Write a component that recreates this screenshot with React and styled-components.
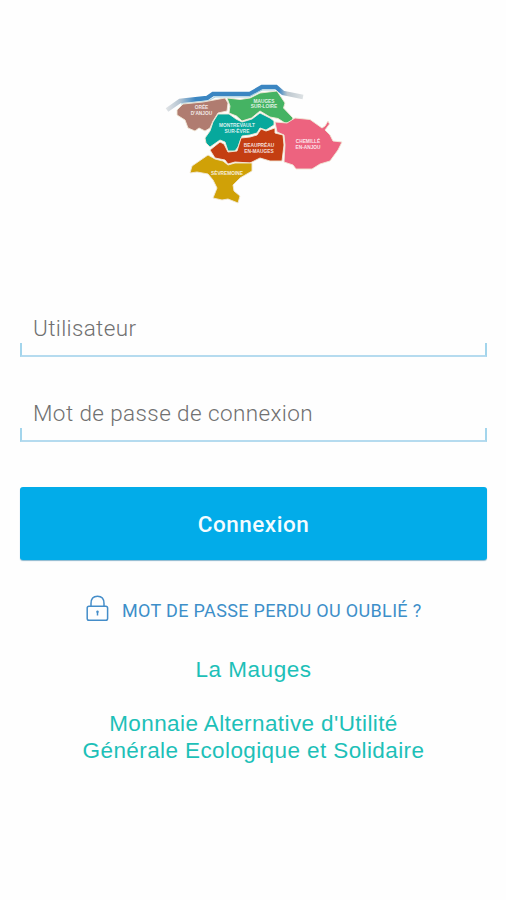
import React from "react";
import styled, { createGlobalStyle } from "styled-components";

const GlobalStyle = createGlobalStyle`
  * {
    box-sizing: border-box;
  }
  body {
    margin: 0;
    background: #ffffff;
  }
`;

const Page = styled.main`
  display: flex;
  flex-direction: column;
  width: 506px;
  height: 900px;
  padding: 78px 19px 0 20px;
  overflow: hidden;
  background: #fefefe;
  font-family: Roboto, sans-serif;
`;

const MapLogo = styled.svg`
  flex: none;
  width: 190px;
  height: 130px;
  margin-left: 140px;
`;

const Form = styled.form`
  display: flex;
  flex-direction: column;
  margin-top: 99px;
`;

const Field = styled.label`
  display: flex;
  flex-direction: column;
  height: 50px;
  margin-bottom: 35px;
  /* only the lower part of the side borders is drawn */
  &::after {
    content: "";
    height: 12px;
    margin-top: -12px;
    border: solid #a3d5ec;
    border-width: 0 2px 2px;
    border-bottom-color: #b5dbef;
  }
`;

const Input = styled.input`
  width: 100%;
  height: 50px;
  padding: 0 13px 6px;
  border: 0;
  outline: 0;
  background: transparent;
  font-family: Roboto, sans-serif;
  font-size: 22.5px;
  font-weight: 300;
  letter-spacing: ${(props) => props.$spacing || "0"};
  &::placeholder {
    color: #707070;
    opacity: 1;
  }
`;

const SubmitButton = styled.button`
  height: 73px;
  margin-top: 10px;
  padding: 0;
  border: 0;
  border-radius: 3px;
  background: #02ace9;
  box-shadow: 0 1px 1px #8db9cf;
  color: #f4fcff;
  font-family: Roboto, sans-serif;
  font-size: 22.5px;
  font-weight: 500;
  letter-spacing: 0.5px;
`;

const ForgotLink = styled.a`
  display: flex;
  align-items: center;
  height: 30px;
  margin: 33px 0 0 66px;
  color: #3d8fc9;
  font-size: 18px;
  line-height: 30px;
  white-space: nowrap;
  text-decoration: none;
`;

const LockIcon = styled.svg`
  flex: none;
  width: 23px;
  height: 27px;
  margin-right: 13px;
`;

const ForgotText = styled.span`
  padding-top: 6px;
  letter-spacing: 0.34px;
`;

const Currency = styled.h1`
  margin: 33px 0 0;
  color: #1dc0b8;
  font: 400 22.5px/27px "Liberation Sans", Arial, sans-serif;
  letter-spacing: 0.5px;
  text-align: center;
`;

const Tagline = styled.p`
  margin: 27px 0 0;
  color: #1dc0b8;
  font: 400 22.5px/27px "Liberation Sans", Arial, sans-serif;
  letter-spacing: 0.4px;
  text-align: center;
`;

const Town = styled.text`
  fill: #fff;
  fill-opacity: 0.85;
  font-family: "Liberation Sans", Arial, sans-serif;
  font-size: 4.8px;
  font-weight: 700;
  text-anchor: middle;
`;

const regions = [
  { color: "#b07c70", points: "177,110 183,104 203,102 225,98 228,103 227,111 218,113 213,121 210,128 205,131 199,128 195,131 188,128 185,120 177,115" },
  { color: "#45b363", points: "227,98 240,99.5 250,98 260,93 277,91 285,103 283.5,108 293,118 291.5,123 285,123 278,118.5 270,117 260,111 251.5,118 242,121 236.5,116 229,113 230,106" },
  { color: "#07a89c", points: "218,114 229,114 236,119 242,122 252,119 260,113 270,118 274,121 274,125 266,130 260,128 257,133 250,135 242,136 238,147 235,151 228,151 225,142 220,140 210,147 206,143 205,138 210,131 213,122" },
  { color: "#c43e12", points: "210,150 220,142 224,144 228,152 237,151 241,138 250,137 257,135 261,129 266,131 275,128 275,133 283,135 284,145 282,161 270,161 260,158 250,163 235,162 228,164 225,160 215,158" },
  { color: "#ed637f", points: "275,122 287,123 295,118 310,119.5 322,128 325,126 328,121 329.5,124 325,130 330,135 333,141 342,142 338,150 330,161 320,164 312,169 296,169 293,165 284,162 285,145 284,135 277,132" },
  { color: "#d0a107", points: "190,173 192,166 208,155 215,159 223,161 228,165 235,163 252,163 252,171 240,178 233,185 234,191 240,196 238,203 228,199 222,200 213,198 217,188 213,180 208,174 197,172" },
];

const towns = [
  { x: 201.5, y: 109, lines: ["ORÉE", "D'ANJOU"] },
  { x: 264, y: 102.5, lines: ["MAUGES", "SUR-LOIRE"] },
  { x: 237, y: 127, lines: ["MONTREVAULT", "SUR-ÈVRE"] },
  { x: 259, y: 147, lines: ["BEAUPRÉAU", "EN-MAUGES"] },
  { x: 308, y: 143, lines: ["CHEMILLÉ", "EN-ANJOU"] },
  { x: 227, y: 175, lines: ["SÈVREMOINE"] },
];

const MaugesMap = () => (
  <MapLogo viewBox="160 78 190 130" aria-label="Mauges">
    <defs>
      <linearGradient id="loire" gradientUnits="userSpaceOnUse" x1="165" y1="0" x2="304" y2="0">
        <stop offset="0" stopColor="#e4e6e8" />
        <stop offset="0.1" stopColor="#b9c7d3" />
        <stop offset="0.22" stopColor="#3b86c2" />
        <stop offset="0.82" stopColor="#3b86c2" />
        <stop offset="0.88" stopColor="#bcc7cf" />
        <stop offset="1" stopColor="#dfe3e5" />
      </linearGradient>
    </defs>
    <path d="M167 110 L180 101 L207 98 L213 94 L236 94 L250 94 L262 87 L276 87 L283 93 L303 97" fill="none" stroke="url(#loire)" strokeWidth="4.5" />
    <path d="M181 104 L208 101 L215 97 L249 97 L262 90 L275 90" fill="none" stroke="#a9d2df" strokeWidth="1.2" />
    {regions.map((region) => (
      <polygon key={region.color} points={region.points} fill={region.color} stroke="#f1e8d6" strokeWidth="0.9" strokeLinejoin="round" />
    ))}
    {towns.map((town) =>
      town.lines.map((line, i) => (
        <Town key={line} x={town.x} y={town.y + i * 5.6}>{line}</Town>
      ))
    )}
  </MapLogo>
);

const Lock = () => (
  <LockIcon viewBox="0 0 23 27" fill="none" stroke="#448dc9" strokeWidth="1.5">
    <rect x="1.2" y="11.3" width="20.4" height="14" rx="1.8" />
    <path d="M5 11 V8.5 C5 3.8 7.8 1.3 11.5 1.3 S18 3.8 18 8.5 V11" />
    <circle cx="11.5" cy="16.8" r="1.2" fill="#448dc9" stroke="none" />
    <path d="M11.5 16.5 V20.5" />
  </LockIcon>
);

export default function App() {
  return (
    <>
      <GlobalStyle />
      <Page>
        <MaugesMap />
        <Form onSubmit={(e) => e.preventDefault()}>
          <Field>
            <Input placeholder="Utilisateur" $spacing="0.35px" />
          </Field>
          <Field>
            <Input type="password" placeholder="Mot de passe de connexion" $spacing="0.4px" />
          </Field>
          <SubmitButton type="submit">Connexion</SubmitButton>
        </Form>
        <ForgotLink href="#">
          <Lock />
          <ForgotText>MOT DE PASSE PERDU OU OUBLIÉ ?</ForgotText>
        </ForgotLink>
        <Currency>La Mauges</Currency>
        <Tagline>
          Monnaie Alternative d'Utilité
          <br />
          Générale Ecologique et Solidaire
        </Tagline>
      </Page>
    </>
  );
}
